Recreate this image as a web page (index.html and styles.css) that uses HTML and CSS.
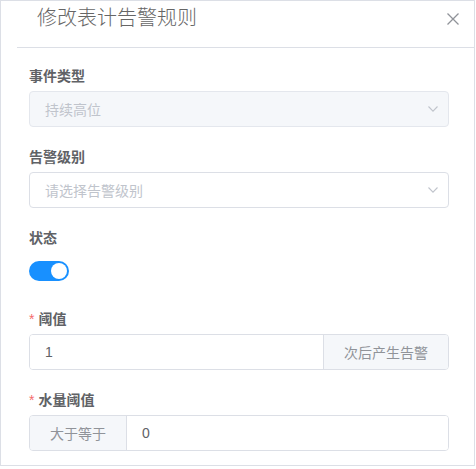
FILE: index.html
```html
<!DOCTYPE html>
<html>
  <head>
    <title>修改表计告警规则</title>
    <link rel="stylesheet" href="styles.css">
  </head>
  <body>
    <div class="dialog">
      <div class="dialog-header">
        <span class="dialog-title">修改表计告警规则</span>
        <button class="dialog-close" type="button">
          <svg width="12" height="12" viewBox="0 0 12 12">
            <path d="M0.5 0.5 L11.5 11.5 M11.5 0.5 L0.5 11.5" stroke="#909399" stroke-width="1.3" fill="none" />
          </svg>
        </button>
      </div>

      <form class="rule-form">
        <div class="form-item">
          <label class="form-label">事件类型</label>
          <div class="select is-disabled">
            <span class="placeholder">持续高位</span>
            <svg class="arrow" width="10" height="6" viewBox="0 0 10 6">
              <path d="M0.5 0.5 L5 5.2 L9.5 0.5" stroke="#c0c4cc" stroke-width="1.1" fill="none" />
            </svg>
          </div>
        </div>

        <div class="form-item">
          <label class="form-label">告警级别</label>
          <div class="select">
            <span class="placeholder">请选择告警级别</span>
            <svg class="arrow" width="10" height="6" viewBox="0 0 10 6">
              <path d="M0.5 0.5 L5 5.2 L9.5 0.5" stroke="#c0c4cc" stroke-width="1.1" fill="none" />
            </svg>
          </div>
        </div>

        <div class="form-item">
          <label class="form-label">状态</label>
          <div class="switch-row">
            <span class="switch is-checked"><span class="switch-knob"></span></span>
          </div>
        </div>

        <div class="form-item">
          <label class="form-label is-required">阈值</label>
          <div class="input-group">
            <input class="input" type="text" value="1" />
            <span class="input-addon addon-append">次后产生告警</span>
          </div>
        </div>

        <div class="form-item">
          <label class="form-label is-required">水量阈值</label>
          <div class="input-group">
            <span class="input-addon addon-prepend">大于等于</span>
            <input class="input" type="text" value="0" />
          </div>
        </div>
      </form>
    </div>
  </body>
</html>
```

FILE: styles.css
```css
body {
  margin: 0;
  background: #fff;
  font-family: "Liberation Sans", "Noto Sans CJK SC", sans-serif;
  color: #606266;
}

.dialog {
  box-sizing: border-box;
  width: 475px;
  height: 466px;
  border: 1px solid #dcdfe6;
  background: #fff;
}

.dialog-header {
  display: flex;
  align-items: center;
  justify-content: space-between;
  margin-left: 16px;
  padding: 3px 15px 15px 20px;
  border-bottom: 1px solid #dcdfe6;
}

.dialog-title {
  font-size: 20px;
  line-height: 28px;
  font-weight: 300;
  color: #666;
}

.dialog-close {
  display: flex;
  padding: 0;
  margin-top: 1px;
  border: none;
  background: none;
}

.rule-form {
  padding: 18px 25px 0 28px;
}

.form-item {
  margin-bottom: 20px;
}

.form-label {
  display: block;
  font-size: 14px;
  line-height: 20px;
  font-weight: bold;
  color: #606266;
  margin-bottom: 5px;
}

/* required star */
.form-label.is-required::before {
  content: "*";
  color: #f56c6c;
  font-weight: normal;
  margin-right: 4px;
}

.select {
  box-sizing: border-box;
  width: 420px;
  height: 36px;
  display: flex;
  align-items: center;
  justify-content: space-between;
  padding: 0 10px 0 15px;
  border: 1px solid #dcdfe6;
  border-radius: 4px;
  background: #fff;
}

.select.is-disabled {
  background: #f5f7fa;
  border-color: #e4e7ed;
}

.placeholder {
  font-size: 14px;
  color: #c0c4cc;
}

.switch-row {
  height: 36px;
  display: flex;
  align-items: center;
}

.switch {
  position: relative;
  width: 40px;
  height: 20px;
  border-radius: 10px;
  background: #dcdfe6;
}

.switch.is-checked {
  background: #1890ff;
}

.switch-knob {
  position: absolute;
  top: 2px;
  left: 2px;
  width: 16px;
  height: 16px;
  border-radius: 50%;
  background: #fff;
}

.switch.is-checked .switch-knob {
  left: 22px;
}

.input-group {
  box-sizing: border-box;
  width: 420px;
  height: 36px;
  display: flex;
  border: 1px solid #dcdfe6;
  border-radius: 4px;
  overflow: hidden;
}

.input {
  flex: 1;
  min-width: 0;
  border: none;
  outline: none;
  padding: 0 15px;
  font-family: "Liberation Sans", "Noto Sans CJK SC", sans-serif;
  font-size: 14px;
  color: #606266;
  background: #fff;
}

.input-addon {
  display: flex;
  align-items: center;
  padding: 0 20px;
  font-size: 14px;
  color: #909399;
  background: #f5f7fa;
}

.addon-append {
  border-left: 1px solid #dcdfe6;
}

.addon-prepend {
  border-right: 1px solid #dcdfe6;
}
```
